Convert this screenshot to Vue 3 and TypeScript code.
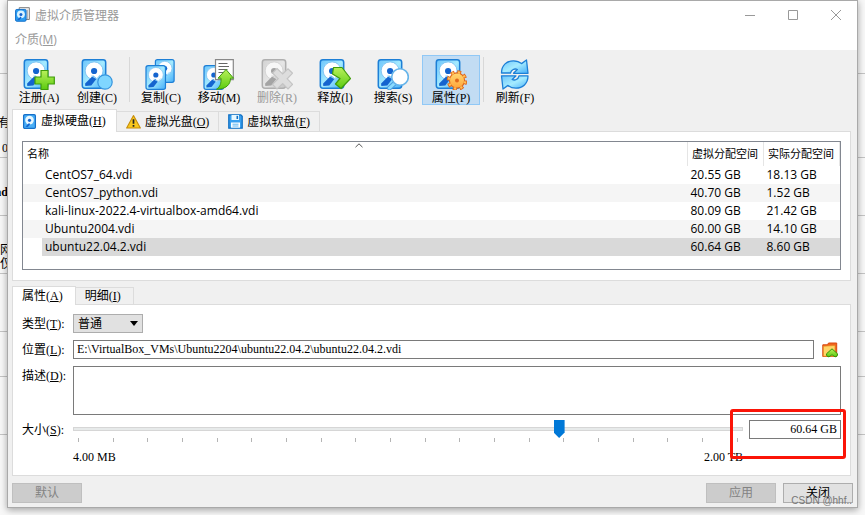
<script setup lang="ts">
import { ref } from 'vue'

type Icon = 'add' | 'create' | 'copy' | 'move' | 'remove' | 'release' | 'search' | 'props' | 'refresh'
interface Tool { icon: Icon; label: string; disabled?: boolean; active?: boolean; gap?: boolean }
interface Medium { name: string; virtual: string; actual: string }

const tools: Tool[] = [
  { icon: 'add', label: '注册(A)' },
  { icon: 'create', label: '创建(C)' },
  { icon: 'copy', label: '复制(C)', gap: true },
  { icon: 'move', label: '移动(M)' },
  { icon: 'remove', label: '删除(R)', disabled: true },
  { icon: 'release', label: '释放(l)' },
  { icon: 'search', label: '搜索(S)' },
  { icon: 'props', label: '属性(P)', active: true },
  { icon: 'refresh', label: '刷新(F)', gap: true },
]

const media: Medium[] = [
  { name: 'CentOS7_64.vdi', virtual: '20.55 GB', actual: '18.13 GB' },
  { name: 'CentOS7_python.vdi', virtual: '40.70 GB', actual: '1.52 GB' },
  { name: 'kali-linux-2022.4-virtualbox-amd64.vdi', virtual: '80.09 GB', actual: '21.42 GB' },
  { name: 'Ubuntu2004.vdi', virtual: '60.00 GB', actual: '14.10 GB' },
  { name: 'ubuntu22.04.2.vdi', virtual: '60.64 GB', actual: '8.60 GB' },
]

const selected = ref('ubuntu22.04.2.vdi')
const mediumType = ref('普通')
const location = ref('E:\\VirtualBox_VMs\\Ubuntu2204\\ubuntu22.04.2\\ubuntu22.04.2.vdi')
const description = ref('')
const size = ref(730)
const sizeText = ref('60.64 GB')
</script>

<template>
  <div class="desktop">
    <div class="behind" aria-hidden="true">
      <i class="rule r1"></i><i class="rule r2"></i><i class="rule r3"></i><i class="rule r4"></i>
      <i class="rule r5"></i><i class="rule r6"></i><i class="rule r7"></i>
      <span class="scrap s1">有</span>
      <span class="scrap s2">0</span>
      <span class="scrap s3">ad</span>
      <span class="scrap s4">[网</span>
      <span class="scrap s5">[仅</span>
    </div>

    <svg class="defs" width="0" height="0" aria-hidden="true">
      <defs>
        <linearGradient id="blue" x1="0" y1="0" x2="1" y2="1">
          <stop offset="0" stop-color="#6cc4fb" /><stop offset=".5" stop-color="#a5ebff" /><stop offset="1" stop-color="#45aef9" />
        </linearGradient>
        <linearGradient id="green" x1="0" y1="0" x2="0" y2="1">
          <stop offset="0" stop-color="#b9f05a" /><stop offset="1" stop-color="#5bcb10" />
        </linearGradient>
        <linearGradient id="orange" x1="0" y1="0" x2="0" y2="1">
          <stop offset="0" stop-color="#ffd873" /><stop offset="1" stop-color="#ffa53a" />
        </linearGradient>
        <symbol id="disk" viewBox="0 0 25 30">
          <rect x=".8" y=".8" width="23.4" height="28.4" rx="2.6" fill="url(#blue)" stroke="#1d7fd6" stroke-width="1.5" />
          <circle cx="12.6" cy="11.8" r="8.900" fill="#fff" stroke="#77bdf0" stroke-width=".8" />
          <path d="M3.600 24.500 11.600 16.500l3.600 2.900-5.400 7-6 .6z" fill="#1464cf" />
          <path d="M10 16.800l5.400 3 3.200-3.600" fill="none" stroke="#8bd3fa" stroke-width="1.100" />
          <circle cx="12.6" cy="12" r="3.1" fill="#1464cf" />
        </symbol>
      </defs>
    </svg>

    <main class="window">
      <header class="titlebar">
        <svg class="app-icon" viewBox="0 0 16 16">
          <path d="M4.5.7h10.8v12.6H4.500z" fill="#f4f4f4" stroke="#777" />
          <path d="M13 3v10" stroke="#999" />
          <rect x=".6" y="2.600" width="11.200" height="12.600" rx="1.300" fill="#2b9cf2" stroke="#0f6cc6" />
          <circle cx="6.300" cy="7.800" r="4.200" fill="#d9f3ff" />
          <circle cx="6.300" cy="8" r="1.600" fill="#1464cf" />
          <path d="M2.200 13.800 6 10.200l1 1.200-2.600 2.600z" fill="#1464cf" />
        </svg>
        <h1>虚拟介质管理器</h1>
        <div class="win-controls">
          <button type="button" aria-label="最小化"><svg viewBox="0 0 10 10"><path d="M0 5.500h10" /></svg></button>
          <button type="button" aria-label="最大化"><svg viewBox="0 0 10 10"><path d="M.5.5h9v9h-9z" /></svg></button>
          <button type="button" aria-label="关闭窗口"><svg viewBox="0 0 10 10"><path d="M0 0l10 10M10 0L0 10" /></svg></button>
        </div>
      </header>
      <nav class="menubar"><button type="button">介质(<u>M</u>)</button></nav>

      <div class="toolbar" role="toolbar">
        <template v-for="t in tools" :key="t.icon">
          <span v-if="t.gap" class="sep"></span>
          <button type="button" class="tool" :class="{ active: t.active }" :disabled="t.disabled">
            <svg class="tool-icon" viewBox="0 0 32 31">
              <template v-if="t.icon === 'copy'">
                <use href="#disk" x="9" y="0" width="21.500" height="24" />
                <use href="#disk" x="0" y="6" width="21.500" height="25" />
              </template>
              <template v-else-if="t.icon === 'move'">
                <use href="#disk" x="0" y="6" width="21.500" height="25" />
                <path d="M12.500.7h17.800v20H12.500z" fill="#fff" stroke="#888" stroke-width="1.200" />
                <path d="M15.500 4.500h9M15.500 7.500h10.500M15.500 10.500h9M15.500 13.500h5" stroke="#666" stroke-width="1.200" />
                <path d="M23 10.500l7.500 8.700h-3c0 6.500-4.500 11-14 11 3.800-2.400 4.800-6 4.500-11h-3z" fill="url(#green)" stroke="#3f9c0a" stroke-linejoin="round" />
              </template>
              <template v-else-if="t.icon === 'refresh'">
                <path d="M2.500 14C2.500 6 8 1.800 14.500 1.800c3.500 0 6 1 8 2.800l5-3.600 1.500 13.300H14.500l3.800-3.800c-2.600-1.200-6 0-6.800 3.500z" fill="url(#blue)" stroke="#1d7fd6" stroke-width="1.300" stroke-linejoin="round" />
                <path d="M29 16.800c0 8-5.500 12.400-12 12.400-3.500 0-6-1-8-2.800l-5 3.600-1.500-13.200H17l-3.800 3.700c2.600 1.200 6 0 6.800-3.700z" fill="url(#blue)" stroke="#1d7fd6" stroke-width="1.300" stroke-linejoin="round" />
              </template>
              <template v-else>
                <use href="#disk" x="0" y="0" width="26" height="30" />
                <path v-if="t.icon === 'add'" d="M18 11.500h7v6.500h6.300v7H25v5.500h-7V25h-6v-7h6z" fill="url(#green)" stroke="#3f9c0a" stroke-width="1.200" />
                <circle v-if="t.icon === 'create'" cx="24" cy="23" r="7.200" fill="#7fd6ff" stroke="#3795de" stroke-width="1.200" />
                <path v-if="t.icon === 'remove'" d="M16 9.500l5.700 5.400 5.300-5 4.500 4.300-5.300 5.600 5.300 5.600-4.500 4.500-5.300-5.200-5.700 5.200-4.500-4.500 5.700-5.600-5.700-5.800z" fill="#ccc" stroke="#999" stroke-width="1.200" />
                <path v-if="t.icon === 'release'" d="M14.500 8.500h8.500l8.500 11-9.500 10-5.500-4.500 4.500-5.500-7.500-4.500z" fill="url(#green)" stroke="#3f9c0a" stroke-width="1.200" stroke-linejoin="round" />
                <g v-if="t.icon === 'search'">
                  <path d="M18.500 23.500L12.500 29" stroke="#4e9ee0" stroke-width="5" stroke-linecap="round" />
                  <path d="M18.500 23.500L12.500 29" stroke="#8bdcff" stroke-width="3" stroke-linecap="round" />
                  <circle cx="23" cy="18" r="8.300" fill="#fff" stroke="#67b5ea" stroke-width="1.600" />
                </g>
                <g v-if="t.icon === 'props'">
                  <circle cx="22" cy="21.500" r="8.200" fill="none" stroke="#e1691c" stroke-width="4.200" stroke-dasharray="3.700 2.740" />
                  <circle cx="22" cy="21.500" r="7.600" fill="url(#orange)" stroke="#e1691c" stroke-width="1.200" />
                  <circle cx="22" cy="21.500" r="8.200" fill="none" stroke="#ffbe55" stroke-width="2.400" stroke-dasharray="2.100 4.340" stroke-dashoffset="-.8" />
                  <circle cx="22" cy="21.500" r="2" fill="#e1691c" />
                </g>
              </template>
            </svg>
            <span>{{ t.label }}</span>
          </button>
        </template>
      </div>

      <section class="media">
        <div class="tabs" role="tablist">
          <button type="button" role="tab" class="tab on" aria-selected="true">
            <svg class="tab-icon" viewBox="0 0 14 16">
              <rect x=".7" y=".7" width="12.600" height="14.600" rx="1.300" fill="#49aef6" stroke="#146fc9" stroke-width="1.300" />
              <circle cx="7" cy="6.500" r="4.600" fill="#e8f8ff" /><circle cx="7" cy="6.700" r="1.700" fill="#1464cf" />
              <path d="M2.500 13.500L6.500 9.500l1.200 1.300-2.500 3z" fill="#1464cf" />
            </svg>
            <span>虚拟硬盘(<u>H</u>)</span>
          </button>
          <button type="button" role="tab" class="tab" aria-selected="false">
            <svg class="tab-icon" viewBox="0 0 14 14">
              <path d="M7 1.500L13.400 13H.6z" fill="#f9c81d" stroke="#c58b08" stroke-linejoin="round" />
              <path d="M7 5v4.200M7 10.300v1.600" stroke="#222" stroke-width="1.600" />
            </svg>
            <span>虚拟光盘(<u>O</u>)</span>
          </button>
          <button type="button" role="tab" class="tab" aria-selected="false">
            <svg class="tab-icon" viewBox="0 0 15 15">
              <path d="M.8.8h12l1.400 1.400v12H.8z" fill="#39a0f0" stroke="#1170c4" stroke-width="1.300" />
              <path d="M3.500 1h7.500v5H3.500z" fill="#e8f8ff" /><path d="M8.500 1.800h1.600v3.200H8.500z" fill="#1170c4" />
              <path d="M3 8.500h9v5.200H3z" fill="#fff" /><path d="M4.500 10.200h6M4.500 12h6" stroke="#5eb4f0" />
            </svg>
            <span>虚拟软盘(<u>F</u>)</span>
          </button>
        </div>
        <div class="pane list-pane">
          <div class="list">
            <table>
              <colgroup><col /><col class="c2" /><col class="c3" /></colgroup>
              <thead>
                <tr>
                  <th scope="col">名称
                    <svg class="sort" viewBox="0 0 8 5"><path d="M.5 4.200L4 .8l3.500 3.400" /></svg>
                  </th>
                  <th scope="col">虚拟分配空间</th>
                  <th scope="col">实际分配空间</th>
                </tr>
              </thead>
              <tbody>
                <tr v-for="m in media" :key="m.name" :class="{ selected: m.name === selected }" @click="selected = m.name">
                  <td><span>{{ m.name }}</span></td>
                  <td>{{ m.virtual }}</td>
                  <td>{{ m.actual }}</td>
                </tr>
              </tbody>
            </table>
          </div>
        </div>
      </section>

      <section class="details">
        <div class="tabs" role="tablist">
          <button type="button" role="tab" class="tab on" aria-selected="true"><span>属性(<u>A</u>)</span></button>
          <button type="button" role="tab" class="tab" aria-selected="false"><span>明细(<u>I</u>)</span></button>
        </div>
        <form class="pane form" @submit.prevent>
          <label for="type">类型(<u>T</u>):</label>
          <div class="field">
            <div class="select">
              <select id="type" v-model="mediumType"><option>普通</option></select>
              <svg class="arrow" viewBox="0 0 8 5"><path d="M0 0h8L4 5z" /></svg>
            </div>
          </div>

          <label for="location">位置(<u>L</u>):</label>
          <div class="field">
            <input id="location" v-model="location" type="text" />
            <button type="button" class="browse" aria-label="选择位置">
              <svg viewBox="0 0 16 16">
                <path d="M.8 2.800h4.700l1-1.800h8.200v13.500H.8z" fill="#f0651d" stroke="#d9480f" stroke-linejoin="round" />
                <path d="M1.400 4.200l11.600-.7v10.800H1.400z" fill="#ffd466" stroke="#e58a22" stroke-width=".7" />
                <path d="M10 6.800l5.500 5c.3 2-1 3-2.500 3l-3-2-3 2c-1.700 0-2.700-1-2.500-3z" fill="url(#green)" stroke="#349308" stroke-linejoin="round" />
              </svg>
            </button>
          </div>

          <label for="description">描述(<u>D</u>):</label>
          <textarea id="description" v-model="description"></textarea>

          <label for="size">大小(<u>S</u>):</label>
          <div class="field size">
            <div class="slider">
              <input id="size" v-model="size" type="range" min="0" max="1000" />
              <div class="ticks"><i v-for="n in 20" :key="n"></i></div>
              <div class="range"><span>4.00 MB</span><span>2.00 TB</span></div>
            </div>
            <input v-model="sizeText" class="amount" type="text" aria-label="大小" />
            <i class="marker"></i>
          </div>
        </form>
      </section>

      <footer>
        <button type="button" disabled>默认</button>
        <span class="spacer"></span>
        <button type="button" disabled>应用</button>
        <button type="button">关闭</button>
      </footer>
    </main>
    <span class="watermark">CSDN @hhf..</span>
  </div>
</template>

<style>
body { margin: 0; background: #f8f8f8; }
</style>

<style scoped>
* { box-sizing: border-box; }
.desktop {
  position: relative;
  display: flex;
  min-height: 100vh;
  padding: 0 7px 7px;
  overflow: hidden;
  font: 12px/16px "Liberation Serif", "Noto Sans CJK SC", serif;
  color: #000;
}
button, input, select, textarea { font: inherit; color: inherit; margin: 0; border-radius: 0; outline: 0; }
button { padding: 0; border: 0; background: none; white-space: nowrap; }
svg { display: block; flex: none; }
.defs { position: absolute; }
.behind { position: absolute; inset: 0; }
.rule { position: absolute; left: 0; right: 0; height: 1px; background: #c4c4c4; }
.r1 { top: 73px; } .r2 { top: 157px; } .r3 { top: 215px; } .r4 { top: 273px; }
.r5 { top: 331px; } .r6 { top: 376px; } .r7 { top: 434px; }
.scrap { position: absolute; right: calc(100% - 8px); }
.s1 { top: 115px; right: calc(100% - 10px); } .s2 { top: 140px; } .s3 { top: 184px; font-weight: bold; }
.s4 { top: 242px; right: calc(100% - 12px); } .s5 { top: 256px; right: calc(100% - 12px); }

.window {
  position: relative;
  flex: 1;
  min-width: 0;
  display: flex;
  flex-direction: column;
  background: #f0f0f0;
  border: 1px solid #a9a9a9;
  box-shadow: 0 2px 7px rgba(0, 0, 0, .35);
}
.titlebar { display: flex; align-items: center; height: 27px; padding-left: 7px; background: #fff; color: #999; }
.app-icon { width: 15px; height: 15px; }
h1 { flex: 1; margin: 0 0 0 5px; font: 12px/16px "Noto Sans CJK SC", sans-serif; }
.win-controls { display: flex; }
.win-controls button { display: flex; justify-content: center; width: 43px; }
.win-controls svg { width: 10px; height: 10px; fill: none; stroke: #999; overflow: visible; }
.menubar { height: 22px; padding-left: 7px; background: #fff; }
.menubar button { height: 24px; font: 12px/16px "Open Sans", "Noto Sans CJK SC", sans-serif; color: #999; }

.toolbar { display: flex; padding: 5px 2px 4px; }
.tool { display: flex; flex-direction: column; align-items: center; width: 58px; height: 50px; padding-top: 3px; border: 1px solid transparent; }
.tool.active { background: #c2dcf3; border-color: #90c8f6; }
.tool-icon { width: 32px; height: 31px; margin-bottom: 1px; }
.tool span { line-height: 14px; }
.tool:disabled { color: #999; }
.tool:disabled svg { filter: grayscale(1); opacity: .5; }
.sep { width: 1px; height: 45px; margin: 2px 2px 0 3px; background: #d8d8d8; }

.media, .details { margin: 0 6px 0 4px; }
.tabs { display: flex; align-items: flex-end; position: relative; }
.tab { display: flex; align-items: center; gap: 4px; height: 20px; padding: 0 9px; border: 1px solid #dcdcdc; border-left: 0; border-bottom: 0; background: #f0f0f0; }
.tab.on { height: 23px; margin-bottom: -1px; padding: 0 10px 0 9px; border-left: 1px solid #dcdcdc; background: #fff; z-index: 1; }
.tab-icon { width: 15px; height: 15px; }
.pane { border: 1px solid #dcdcdc; background: #fff; }
.list-pane { padding: 9px 9px 10px; }
.list { height: 129px; border: 1px solid #828790; font: 12px/18px "Open Sans", "Noto Sans CJK SC", sans-serif; }
table { width: 100%; border-collapse: collapse; table-layout: fixed; }
.c2 { width: 76px; } .c3 { width: 76px; }
th { position: relative; height: 24px; padding: 0 4px; font-weight: normal; font-size: 11px; text-align: left; white-space: nowrap; border-right: 1px solid #e5e5e5; }
.sort { position: absolute; top: 1px; left: 50%; width: 8px; height: 5px; fill: none; stroke: #555; }
td { height: 18px; padding: 0 3px; white-space: nowrap; }
td:first-child { padding: 0 0 0 19px; }
td:first-child span { display: block; padding-left: 3px; }
tbody tr:nth-child(even) { background: #f5f5f5; }
tr.selected td:not(:first-child), tr.selected td span { background: #d9d9d9; }

.details { margin-top: 5px; }
.details .tab { height: 17px; padding: 0 12px 0 9px; }
.details .tab.on { height: 19px; }
.form { display: grid; grid-template-columns: 51px 1fr; padding: 9px 9px 10px; row-gap: 7px; align-items: start; }
.form > label { margin: 1px 0 -1px; line-height: 19px; }
.field { display: flex; align-items: center; min-width: 0; }
.select { position: relative; width: 70px; height: 19px; }
select { appearance: none; width: 100%; height: 19px; padding: 0 4px; border: 1px solid #adadad; background: #e1e1e1; }
.arrow { position: absolute; right: 5px; top: 7px; width: 8px; height: 5px; pointer-events: none; }
input[type="text"] { flex: 1; min-width: 0; height: 19px; padding: 0 3px; border: 1px solid #7a7a7a; background: #fff; }
.browse { width: 16px; margin: 0 3px 0 8px; }
.browse svg { width: 16px; height: 16px; }
textarea { display: block; width: 100%; height: 49px; border: 1px solid #7a7a7a; background: #fff; resize: none; }
.size { position: relative; align-items: flex-start; gap: 6px; margin-top: -2px; }
.form > label:last-of-type { margin-top: -1px; }
.slider { flex: 1; min-width: 0; }
input[type="range"] { display: block; appearance: none; width: 100%; height: 18px; background: none; }
input[type="range"]::-webkit-slider-runnable-track { height: 4px; border: 1px solid #d6d6d6; background: #e7eaea; }
input[type="range"]::-webkit-slider-thumb { appearance: none; width: 11px; height: 18px; margin-top: -8px; background: #0078d7; clip-path: polygon(0 0, 100% 0, 100% 70%, 50% 100%, 0 70%); }
.ticks { display: flex; justify-content: space-between; padding: 0 5px; }
.ticks i { width: 1px; height: 4px; background: #b5b5b5; }
.range { display: flex; justify-content: space-between; margin-top: 7px; }
.size input.amount { flex: none; width: 92px; text-align: right; }
.marker { position: absolute; top: -11px; right: -5px; width: 116px; height: 50px; border: 3px solid #fb1407; border-radius: 3px; pointer-events: none; }

footer { display: flex; gap: 7px; padding: 7px 4px 4px; }
footer button { width: 70px; height: 20px; border: 1px solid #adadad; background: #e1e1e1; }
footer button:disabled { color: #838383; border-color: #bfbfbf; background: #ccc; }
.spacer { flex: 1; }
.watermark { position: absolute; right: 13px; bottom: 6px; font: 10px/16px "Liberation Sans", sans-serif; color: #777; }
</style>
